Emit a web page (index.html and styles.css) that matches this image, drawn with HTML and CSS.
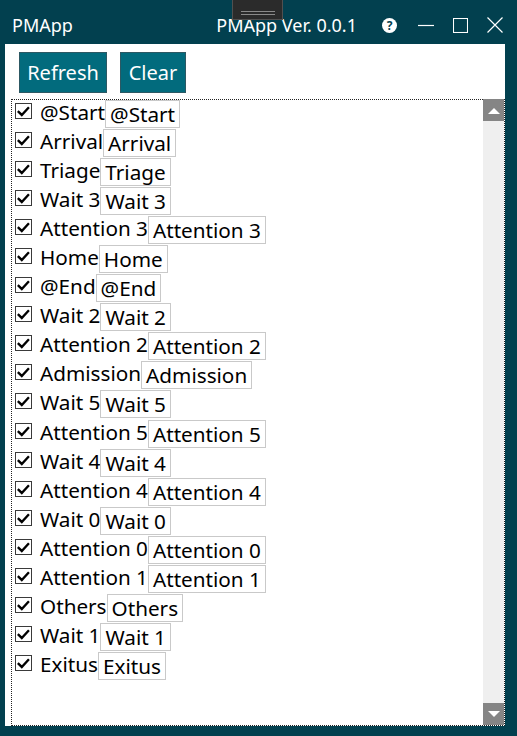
FILE: index.html
```html
<!DOCTYPE html>
<html>
<head>
<meta charset="utf-8">
<title>PMApp</title>
<link rel="stylesheet" href="styles.css">
</head>
<body>
<div class="window">
  <div class="titlebar">
    <div class="app-name">PMApp</div>
    <div class="ver-title">PMApp Ver. 0.0.1</div>
    <span class="help">?</span>
    <svg class="tb-icon min" width="16" height="16" viewBox="0 0 16 16"><line x1="0" y1="8.5" x2="16" y2="8.5" stroke="#fff" stroke-width="1.2"/></svg>
    <svg class="tb-icon max" width="16" height="16" viewBox="0 0 16 16"><rect x="0.5" y="0.5" width="15" height="15" fill="none" stroke="#fff" stroke-width="1.2"/></svg>
    <svg class="tb-icon close" width="16" height="16" viewBox="0 0 16 16"><path d="M0.5 0.5 L15.5 15.5 M15.5 0.5 L0.5 15.5" stroke="#fff" stroke-width="1.2"/></svg>
    <div class="grip"><div class="grip-lines"></div></div>
  </div>
  <div class="content">
    <div class="toolbar">
      <button class="btn btn-refresh">Refresh</button>
      <button class="btn btn-clear">Clear</button>
    </div>
    <div class="list">
      <div class="items" id="items"></div>
      <div class="scrollbar">
        <div class="sb-btn"><svg width="12" height="7" viewBox="0 0 12 7"><path d="M0 7 L6 1 L12 7 Z" fill="#fff"/></svg></div>
        <div class="sb-track"></div>
        <div class="sb-btn"><svg width="12" height="7" viewBox="0 0 12 7"><path d="M0 0 L6 6 L12 0 Z" fill="#fff"/></svg></div>
      </div>
    </div>
  </div>
</div>
<script>
var names = ["@Start","Arrival","Triage","Wait 3","Attention 3","Home","@End","Wait 2","Attention 2","Admission","Wait 5","Attention 5","Wait 4","Attention 4","Wait 0","Attention 0","Attention 1","Others","Wait 1","Exitus"];
var html = "";
names.forEach(function (n) {
  html += '<div class="row">' +
    '<span class="cb"><svg width="17" height="16" viewBox="0 0 17 16"><path d="M3 8.2 L7.2 12.2 L14.8 4" fill="none" stroke="#000" stroke-width="2.5"/></svg></span>' +
    '<span class="label">' + n + '</span>' +
    '<span class="textbox">' + n + '</span>' +
    '</div>';
});
document.getElementById("items").innerHTML = html;
</script>
</body>
</html>
```
FILE: styles.css
```css
html, body {
  margin: 0;
  padding: 0;
}
body {
  width: 517px;
  height: 736px;
  background: #02404f;
  font-family: "Noto Sans", "Open Sans", sans-serif;
  overflow: hidden;
}
.window {
  display: flex;
  flex-direction: column;
  height: 736px;
}
.titlebar {
  position: relative;
  height: 44px;
  box-sizing: border-box;
  padding-top: 6px;
  display: flex;
  align-items: center;
  color: #fff;
  font-size: 18px;
}
.app-name {
  flex: 1;
  padding-left: 12px;
}
.ver-title {
  margin-right: 25px;
}
.help {
  width: 15px;
  height: 15px;
  border-radius: 50%;
  background: #fff;
  color: #02404f;
  font-size: 12px;
  font-weight: bold;
  line-height: 15px;
  text-align: center;
  margin-right: 21px;
}
.tb-icon {
  display: block;
}
.min { margin-right: 19px; }
.max { width: 15px; height: 15px; margin-right: 19px; }
.close { margin-right: 14px; }
.grip {
  position: absolute;
  top: 0;
  left: 232px;
  width: 51px;
  height: 20px;
  box-sizing: border-box;
  background: #2b2b2b;
  border: 1px solid #505050;
  border-top: none;
  display: flex;
  align-items: center;
  justify-content: center;
  padding-top: 6px;
}
.grip-lines {
  width: 34px;
  height: 2px;
  border-top: 1px solid #8a8a8a;
  border-bottom: 1px solid #8a8a8a;
}
.content {
  flex: 1;
  background: #fff;
  margin: 0 12px 10px 5px;
  display: flex;
  flex-direction: column;
  min-height: 0;
}
.toolbar {
  display: flex;
  gap: 13px;
  padding: 8px 0 0 14px;
}
.btn {
  height: 41px;
  box-sizing: border-box;
  background: #026b7d;
  border: 1px solid #2c5863;
  color: #fff;
  font-family: "Noto Sans", "Open Sans", sans-serif;
  font-size: 20px;
  padding: 0;
  margin: 0;
}
.btn-refresh { width: 88px; }
.btn-clear { width: 66px; }
.list {
  flex: 1;
  min-height: 0;
  margin: 6px 0 0 6px;
  border: 1px dotted #222;
  display: flex;
}
.items {
  flex: 1;
  padding-left: 2px;
}
.row {
  height: 29.05px;
  display: flex;
  align-items: flex-start;
  white-space: nowrap;
}
.cb {
  width: 17px;
  height: 16px;
  margin-top: 3px;
  margin-left: 1px;
  border: 1px solid #3a3a3a;
  box-sizing: border-box;
  display: flex;
  background: #fff;
}
.cb svg {
  margin: -1px 0 0 -1px;
}
.label {
  margin-left: 8px;
  font-size: 20.7px;
  line-height: 24px;
  color: #000;
}
.textbox {
  height: 28px;
  box-sizing: border-box;
  border: 1px solid #c9c9c9;
  padding: 0 4px;
  font-size: 20.7px;
  line-height: 27px;
  color: #000;
}
.scrollbar {
  width: 21px;
  display: flex;
  flex-direction: column;
  background: #efefef;
  margin-top: -1px;
}
.sb-btn {
  height: 22px;
  background: #858585;
  display: flex;
  align-items: center;
  justify-content: center;
}
.sb-track {
  flex: 1;
}
```
